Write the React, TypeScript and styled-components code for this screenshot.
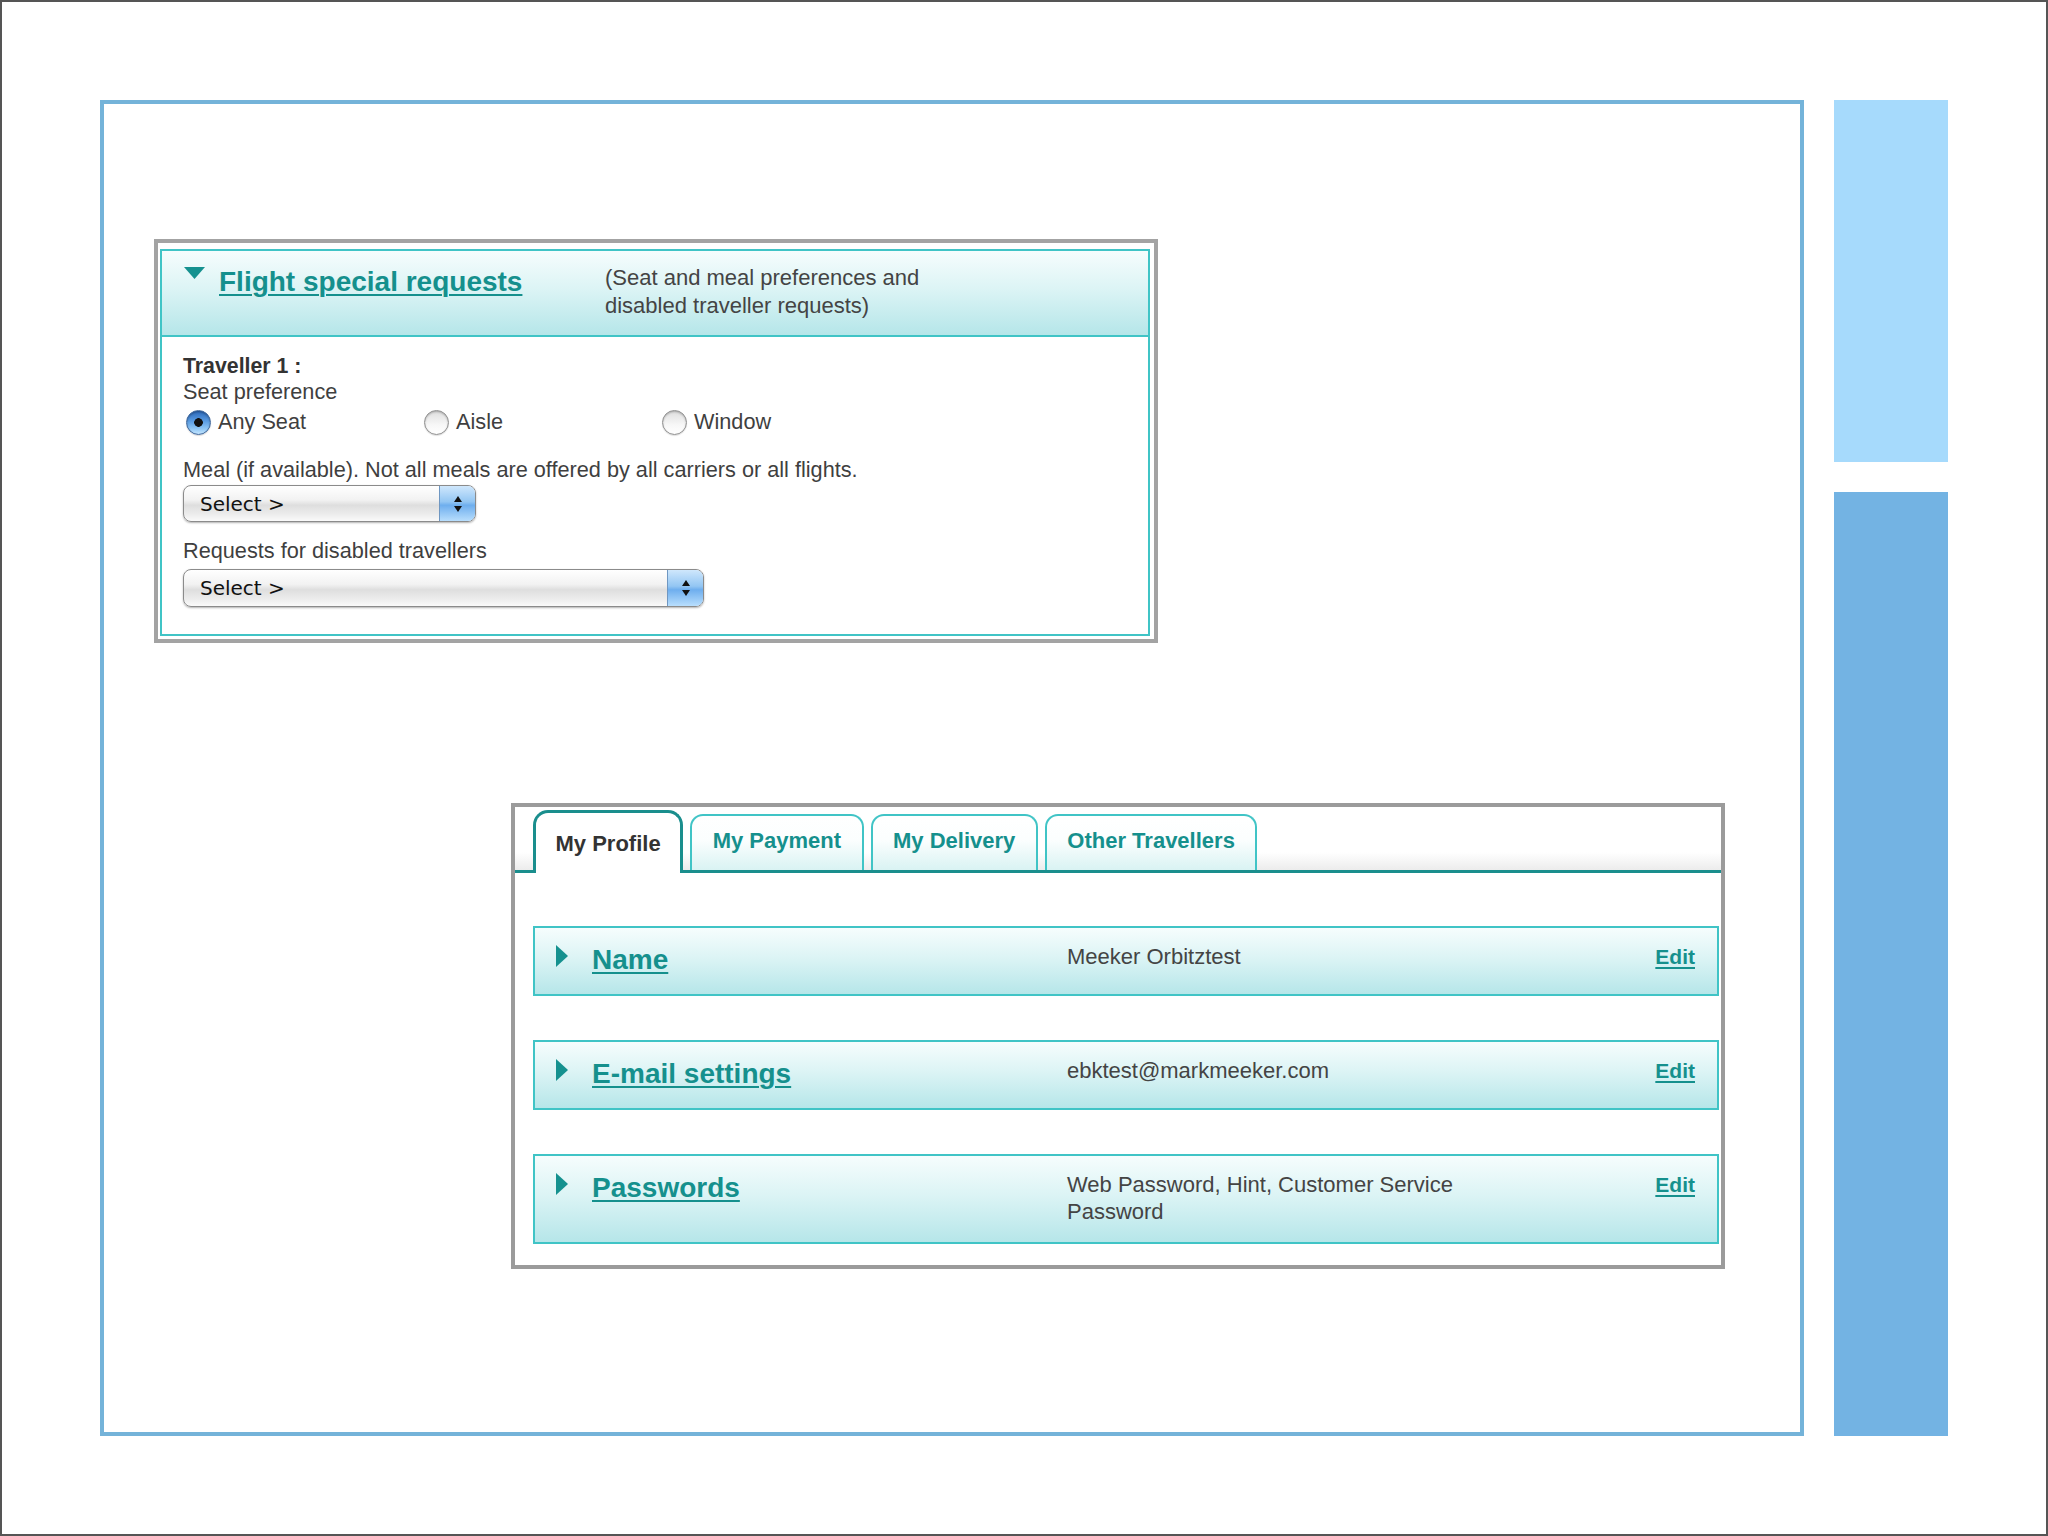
import styled, { createGlobalStyle, css } from 'styled-components';

const GlobalStyle = createGlobalStyle`
  html, body {
    margin: 0;
    padding: 0;
    background: #fff;
  }
  body {
    font-family: "Liberation Sans", Arial, Helvetica, sans-serif;
    color: #3f3f3f;
  }
  * {
    box-sizing: border-box;
  }
`;

const TEAL_LINE = '#40c4c6';
const TEAL_DARK = '#1a8e8d';
const LINK = '#15908d';

const Page = styled.div`
  width: 2048px;
  height: 1536px;
  border: 2px solid #555;
  padding: 98px 0 98px 98px;
  display: flex;
  gap: 30px;
  background: #fff;
`;

const MainFrame = styled.div`
  flex: none;
  width: 1704px;
  border: 4px solid #74b3d9;
  padding: 135px 0 0 50px;
  display: flex;
  flex-direction: column;
  align-items: flex-start;
`;

const SideColumn = styled.div`
  flex: none;
  width: 114px;
  display: flex;
  flex-direction: column;
  gap: 30px;
`;

const SideBlock = styled.div<{ $light?: boolean }>`
  background: ${(p) => (p.$light ? '#a6dafc' : '#73b3e3')};
  ${(p) => (p.$light ? 'height: 362px;' : 'flex: 1;')}
`;

/* ---------- flight special requests ---------- */

const FlightPanel = styled.section`
  width: 1004px;
  border: 4px solid #a3a3a3;
  padding: 6px 4px 3px 2px;
  background: #fff;
`;

const FlightInner = styled.div`
  border: 2px solid ${TEAL_LINE};
`;

const FlightHeader = styled.div`
  display: flex;
  align-items: flex-start;
  padding: 14px 0 15px 22px;
  background: linear-gradient(to bottom, #f6fdfd 0%, #dcf4f5 45%, #b5e6e9 100%);
  border-bottom: 2px solid ${TEAL_LINE};
`;

const DownArrow = styled.svg`
  flex: none;
  margin-top: 2px;
  margin-right: 14px;
`;

const BigLink = styled.a<{ $width?: number }>`
  flex: none;
  ${(p) => p.$width && `width: ${p.$width}px;`}
  font-size: 28px;
  line-height: 34px;
  font-weight: bold;
  color: ${LINK};
  text-decoration: underline;
  text-underline-offset: 3px;
  text-decoration-thickness: 2px;
  cursor: pointer;
`;

const HeaderNote = styled.div`
  max-width: 360px;
  margin-top: -1px;
  font-size: 22px;
  line-height: 28px;
  color: #444;
`;

const FlightBody = styled.div`
  padding: 16px 21px 27px 21px;
  display: flex;
  flex-direction: column;
  align-items: flex-start;
`;

const Line = styled.div<{ $bold?: boolean; $gap?: number }>`
  font-size: 21.7px;
  line-height: 26px;
  color: #3f3f3f;
  margin-top: ${(p) => p.$gap ?? 0}px;
  ${(p) => p.$bold && 'font-weight: bold; font-size: 21.3px; color: #333;'}
`;

const RadioRow = styled.div`
  display: grid;
  grid-template-columns: repeat(3, 238px);
  height: 34px;
  align-items: center;
`;

const RadioOption = styled.label`
  display: flex;
  align-items: center;
  gap: 7px;
  padding-left: 3px;
  font-size: 21.7px;
  color: #3f3f3f;
`;

const RadioDot = styled.span<{ $checked?: boolean }>`
  flex: none;
  width: 25px;
  height: 25px;
  border-radius: 50%;
  border: 1px solid #8e8e8e;
  background: linear-gradient(to bottom, #dedede 0%, #f7f7f7 60%, #ffffff 100%);
  box-shadow: inset 0 1px 2px rgba(0, 0, 0, 0.25), 0 1px 1px rgba(0, 0, 0, 0.12);
  ${(p) =>
    p.$checked &&
    css`
      border-color: #3d659a;
      background: radial-gradient(circle at 50% 50%, #111 0 4px, transparent 4.6px),
        linear-gradient(to bottom, #2a67b9 0%, #5b9de3 45%, #8cc4f4 75%, #c3e5ff 100%);
      box-shadow: inset 0 1px 2px rgba(0, 0, 0, 0.3), 0 1px 1px rgba(0, 0, 0, 0.15);
    `}
`;

const SelectBox = styled.div<{ $width: number; $height: number; $gap: number }>`
  width: ${(p) => p.$width}px;
  height: ${(p) => p.$height}px;
  margin-top: ${(p) => p.$gap}px;
  display: flex;
  align-items: center;
  border: 1px solid #8b8b8b;
  border-radius: 8px;
  overflow: hidden;
  background: linear-gradient(to bottom, #ffffff 0%, #f2f2f2 40%, #dedede 55%, #ececec 80%, #fafafa 100%);
  box-shadow: 0 1px 2px rgba(0, 0, 0, 0.3);
`;

const SelectText = styled.span`
  padding-left: 16px;
  font-family: "DejaVu Sans", "Liberation Sans", sans-serif;
  font-size: 20px;
  color: #111;
`;

const SelectArrows = styled.span`
  margin-left: auto;
  width: 36px;
  height: 100%;
  display: flex;
  align-items: center;
  justify-content: center;
  border-left: 1px solid #6f97c2;
  background: linear-gradient(to bottom, #cfe7fc 0%, #93c6f3 45%, #6eaeee 55%, #b8defd 100%);
`;

/* ---------- profile tabs ---------- */

const ProfilePanel = styled.section`
  margin-top: 160px;
  margin-left: 357px;
  width: 1214px;
  border: 4px solid #9b9b9b;
  background: #fff;
`;

const TabBar = styled.div`
  display: flex;
  align-items: flex-end;
  gap: 7px;
  padding: 3px 0 0 18px;
  border-bottom: 3px solid ${TEAL_DARK};
  background: linear-gradient(to bottom, #fff 0%, #fff 72%, #ececec 100%);
`;

const Tab = styled.div<{ $active?: boolean }>`
  font-size: 22px;
  line-height: 26px;
  font-weight: bold;
  white-space: nowrap;
  ${(p) =>
    p.$active
      ? css`
          height: 63px;
          margin-bottom: -3px;
          padding: 18px 19.5px 0;
          border: 3px solid ${TEAL_DARK};
          border-bottom: 0;
          border-radius: 15px 15px 0 0;
          background: #fff;
          color: #333;
        `
      : css`
          height: 56px;
          padding: 12px 20.5px 0;
          border: 2px solid ${TEAL_LINE};
          border-bottom: 0;
          border-radius: 13px 13px 0 0;
          background: linear-gradient(to bottom, #fff 0%, #fbfefe 45%, #d9f3f3 100%);
          color: ${LINK};
        `}
`;

const RowList = styled.div`
  display: flex;
  flex-direction: column;
  gap: 44px;
  padding: 53px 2px 21px 18px;
`;

const ProfileRow = styled.div`
  display: grid;
  grid-template-columns: 36px 475px 1fr auto;
  align-items: start;
  padding: 15px 22px 17px 21px;
  border: 2px solid ${TEAL_LINE};
  background: linear-gradient(to bottom, #f6fdfd 0%, #dcf4f5 45%, #b6e6e9 100%);
`;

const RightArrow = styled.svg`
  margin-top: 2px;
`;

const RowValue = styled.div`
  max-width: 450px;
  font-size: 22px;
  line-height: 27px;
  color: #444;
`;

const EditLink = styled.a`
  font-size: 21px;
  line-height: 27px;
  font-weight: bold;
  color: ${LINK};
  text-decoration: underline;
  text-underline-offset: 3px;
  cursor: pointer;
`;

const tabs = ['My Profile', 'My Payment', 'My Delivery', 'Other Travellers'];

const rows = [
  { title: 'Name', value: 'Meeker Orbitztest' },
  { title: 'E-mail settings', value: 'ebktest@markmeeker.com' },
  { title: 'Passwords', value: 'Web Password, Hint, Customer Service Password' },
];

const seats = ['Any Seat', 'Aisle', 'Window'];

const Select = ({ width, height, gap }: { width: number; height: number; gap: number }) => (
  <SelectBox $width={width} $height={height} $gap={gap}>
    <SelectText>Select &gt;</SelectText>
    <SelectArrows>
      <svg width="10" height="18" viewBox="0 0 10 18">
        <path d="M5 1 L9 7 L1 7 Z" fill="#111" />
        <path d="M5 17 L9 11 L1 11 Z" fill="#111" />
      </svg>
    </SelectArrows>
  </SelectBox>
);

const App = () => {
  return (
    <>
      <GlobalStyle />
      <Page>
        <MainFrame>
          <FlightPanel>
            <FlightInner>
              <FlightHeader>
                <DownArrow width="21" height="12" viewBox="0 0 21 12">
                  <path d="M0 0 L21 0 L10.5 12 Z" fill="#15918f" />
                </DownArrow>
                <BigLink $width={386}>Flight special requests</BigLink>
                <HeaderNote>(Seat and meal preferences and disabled traveller requests)</HeaderNote>
              </FlightHeader>
              <FlightBody>
                <Line $bold>Traveller 1 :</Line>
                <Line>Seat preference</Line>
                <RadioRow>
                  {seats.map((s, idx) => (
                    <RadioOption key={s}>
                      <RadioDot $checked={idx === 0} />
                      {s}
                    </RadioOption>
                  ))}
                </RadioRow>
                <Line $gap={18}>
                  Meal (if available). Not all meals are offered by all carriers or all flights.
                </Line>
                <Select width={293} height={37} gap={2} />
                <Line $gap={16}>Requests for disabled travellers</Line>
                <Select width={521} height={38} gap={5} />
              </FlightBody>
            </FlightInner>
          </FlightPanel>

          <ProfilePanel>
            <TabBar>
              {tabs.map((t, idx) => (
                <Tab key={t} $active={idx === 0}>
                  {t}
                </Tab>
              ))}
            </TabBar>
            <RowList>
              {rows.map((r) => (
                <ProfileRow key={r.title}>
                  <RightArrow width="12" height="22" viewBox="0 0 12 22">
                    <path d="M0 0 L12 11 L0 22 Z" fill="#15918f" />
                  </RightArrow>
                  <BigLink>{r.title}</BigLink>
                  <RowValue>{r.value}</RowValue>
                  <EditLink>Edit</EditLink>
                </ProfileRow>
              ))}
            </RowList>
          </ProfilePanel>
        </MainFrame>

        <SideColumn>
          <SideBlock $light />
          <SideBlock />
        </SideColumn>
      </Page>
    </>
  );
};

export default App;
